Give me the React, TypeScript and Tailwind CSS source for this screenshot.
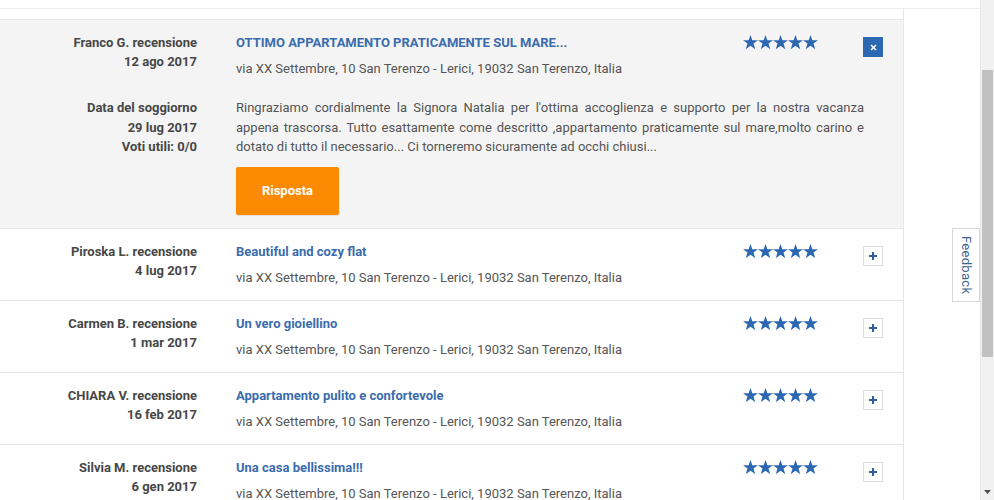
import React from "react";

const Star = () => (
  <svg width="15" height="14.5" viewBox="0 0 24 23" className="block">
    <path
      d="M12 0l2.9 8.3H24l-7.2 5.3 2.8 8.9L12 17.2 4.4 22.5l2.8-8.9L0 8.3h9.1z"
      fill="#2c68b2"
    />
  </svg>
);

const Stars = () => (
  <div className="flex">
    <Star />
    <Star />
    <Star />
    <Star />
    <Star />
  </div>
);

const ADDRESS = "via XX Settembre, 10 San Terenzo - Lerici, 19032 San Terenzo, Italia";

type Row = { name: string; date: string; title: string };

const rows: Row[] = [
  { name: "Piroska L. recensione", date: "4 lug 2017", title: "Beautiful and cozy flat" },
  { name: "Carmen B. recensione", date: "1 mar 2017", title: "Un vero gioiellino" },
  { name: "CHIARA V. recensione", date: "16 feb 2017", title: "Appartamento pulito e confortevole" },
  { name: "Silvia M. recensione", date: "6 gen 2017", title: "Una casa bellissima!!!" },
];

const PlusBtn = () => (
  <div className="w-[20px] h-[20px] border border-[#dcdcdc] bg-white flex items-center justify-center">
    <svg width="10" height="10" viewBox="0 0 10 10">
      <path d="M5 1v8M1 5h8" stroke="#2c5f9e" strokeWidth="2" />
    </svg>
  </div>
);

const CloseBtn = () => (
  <div className="w-[20px] h-[20px] bg-[#2d69b3] flex items-center justify-center">
    <svg width="7" height="7" viewBox="0 0 7 7">
      <path d="M1 1l5 5M6 1L1 6" stroke="#ffffff" strokeWidth="1.6" />
    </svg>
  </div>
);

export default function App() {
  return (
    <div
      className="relative w-[994px] h-[500px] overflow-hidden bg-white flex"
      style={{ fontFamily: "Roboto, 'Liberation Sans', sans-serif" }}
    >
      <div className="w-[980px] flex flex-col">
        <div className="h-[8px] bg-white shrink-0" />
        <div className="flex flex-1 border-t border-[#ececec]">
          {/* main column */}
          <div className="w-[904px] border-r border-[#e6e6e6] flex flex-col">
            <div className="h-[10px] shrink-0" />
            {/* expanded review */}
            <div className="bg-[#f4f4f4] border-t border-[#e8e8e8] border-b border-[#e2e2e2] flex pt-[13px] pb-[13px] text-[13px]">
              <div className="w-[197px] text-right text-[#474747] font-bold leading-[19px]">
                <div>Franco G. recensione</div>
                <div>12 ago 2017</div>
                <div className="mt-[27px] leading-[19.5px]">
                  <div>Data del soggiorno</div>
                  <div>29 lug 2017</div>
                  <div>Voti utili: 0/0</div>
                </div>
              </div>
              <div className="ml-[39px] w-[628px]">
                <div className="flex leading-[19px]">
                  <div className="w-[507px] font-bold text-[#3a6cae]">
                    OTTIMO APPARTAMENTO PRATICAMENTE SUL MARE...
                  </div>
                  <div className="pt-[2px]">
                    <Stars />
                  </div>
                </div>
                <div className="mt-[7px] leading-[19px] text-[#555555]">{ADDRESS}</div>
                <div className="mt-[20px] leading-[19.5px] text-[#555555]">
                  <div className="text-justify [text-align-last:justify]">
                    Ringraziamo cordialmente la Signora Natalia per l'ottima accoglienza e supporto per la nostra vacanza
                  </div>
                  <div className="text-justify [text-align-last:justify]">
                    appena trascorsa. Tutto esattamente come descritto ,appartamento praticamente sul mare,molto carino e
                  </div>
                  <div>
                    dotato di tutto il necessario... Ci torneremo sicuramente ad occhi chiusi...
                  </div>
                </div>
                <div className="mt-[10px] w-[103px] h-[48px] bg-[#fd8a03] rounded-[2px] flex items-center justify-center text-white font-bold text-[13px] shadow-[0_1px_1px_rgba(0,0,0,0.08)]">
                  Risposta
                </div>
              </div>
              <div className="ml-[-1px] pt-[4px]">
                <CloseBtn />
              </div>
            </div>
            {/* collapsed reviews */}
            {rows.map((r) => (
              <div
                key={r.name}
                className="flex pt-[13px] pb-[13px] border-b border-[#e4e4e4] text-[13px] bg-white shrink-0"
              >
                <div className="w-[197px] text-right text-[#474747] font-bold leading-[19px]">
                  <div>{r.name}</div>
                  <div>{r.date}</div>
                </div>
                <div className="ml-[39px] w-[628px]">
                  <div className="flex leading-[19px]">
                    <div className="w-[507px] font-bold text-[#3a6cae]">{r.title}</div>
                    <div className="pt-[2px]">
                      <Stars />
                    </div>
                  </div>
                  <div className="mt-[7px] leading-[19px] text-[#555555]">{ADDRESS}</div>
                </div>
                <div className="ml-[-1px] pt-[4px]">
                  <PlusBtn />
                </div>
              </div>
            ))}
          </div>
          <div className="flex-1 bg-white" />
        </div>
      </div>
      {/* scrollbar */}
      <div className="w-[14px] h-full bg-[#f1f1f1] border-l border-[#e8e8e8] flex flex-col items-center">
        <div className="h-[70px] shrink-0" />
        <div className="w-[11px] h-[287px] bg-[#c1c1c1]" />
        <div className="flex-1" />
        <svg width="7" height="5" viewBox="0 0 7 5" className="mb-[5px]">
          <path d="M0 0h7L3.5 4z" fill="#505050" />
        </svg>
      </div>
      {/* Feedback tab */}
      <div className="absolute left-[952px] top-[228px] w-[28px] h-[74px] bg-white border border-[#d8d8d8] flex items-center justify-center">
        <span className="[writing-mode:vertical-rl] text-[13px] text-[#3f6890] tracking-[0.3px]">
          Feedback
        </span>
      </div>
    </div>
  );
}
